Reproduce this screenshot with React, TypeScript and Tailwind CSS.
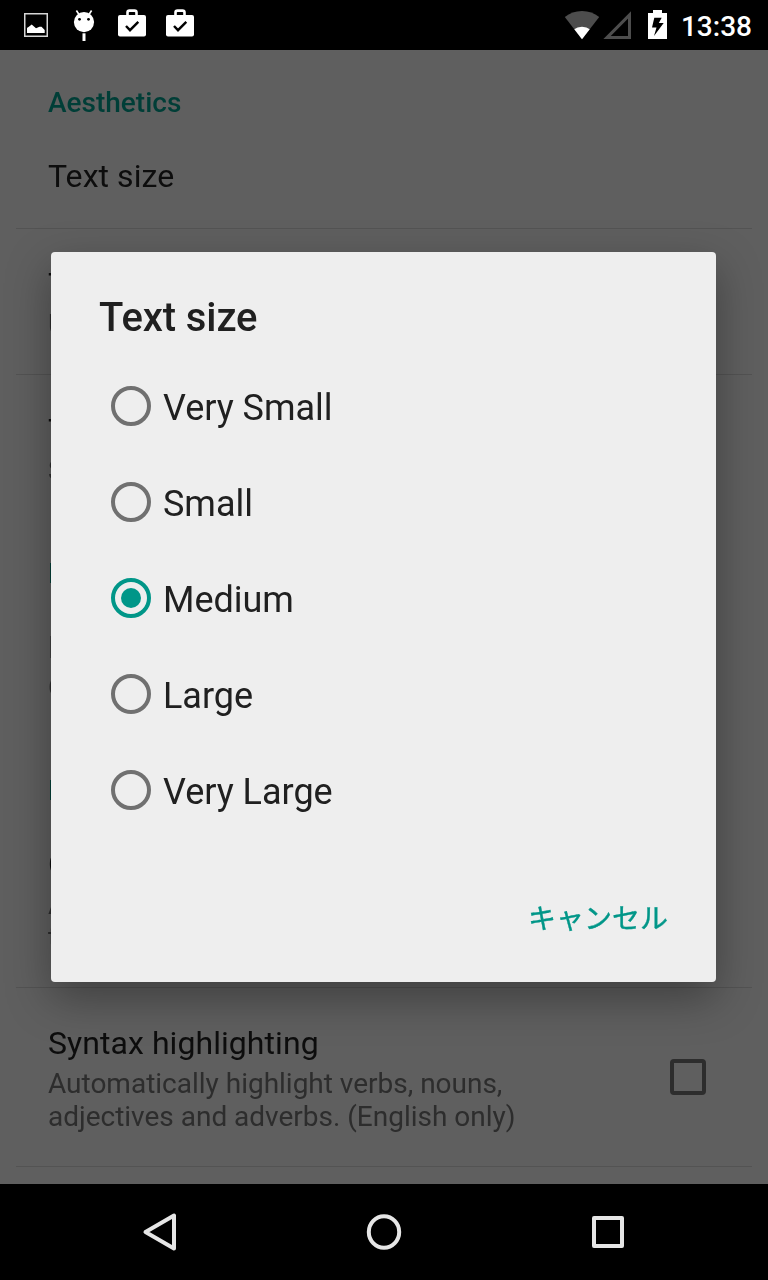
import React from "react";

function Heading({ children }: { children: React.ReactNode }) {
  return (
    <h2 className="h-[71px] px-8 pt-9 text-[28px] leading-[33px] font-medium text-[#003e37]">{children}</h2>
  );
}

type RowProps = { title: string; summary?: string[]; divider?: boolean; checkbox?: boolean };

function Row({ title, summary = [], divider, checkbox }: RowProps) {
  return (
    <div
      className={`flex items-start justify-between border-b px-8 pt-[35px] ${
        summary.length ? "pb-[33px]" : "pb-7"
      } ${divider ? "border-[#535353]" : "border-transparent"}`}
    >
      <div>
        <div className="text-[32px] leading-10 tracking-[0.06px] text-[#0d0d0d]">{title}</div>
        <div className="mt-1 text-[28px] leading-[33px] tracking-[-0.01px] text-[#2d2d2d]">
          {summary.map((line) => (
            <div key={line}>{line}</div>
          ))}
        </div>
      </div>
      {checkbox && <div className="mt-9 mr-[14px] size-9 rounded-[4px] border-4 border-[#2d2d2d]" />}
    </div>
  );
}

function Briefcase() {
  return (
    <svg width="28" height="28" viewBox="0 0 28 28">
      <path d="M9.5 6V3.6Q9.5 1.6 11.5 1.6H16.5Q18.5 1.6 18.5 3.6V6" fill="none" stroke="#fff" strokeWidth="2.6" />
      <rect y="6" width="28" height="21.5" rx="2" fill="#fff" />
      <path d="M8 17l4 4.2 8.3-8.4" fill="none" stroke="#000" strokeWidth="2.4" />
    </svg>
  );
}

function StatusBar() {
  return (
    <header className="flex h-[50px] items-start bg-black text-white">
      <svg className="mt-[13px] ml-6" width="24" height="24" viewBox="0 0 24 24">
        <rect x="0.75" y="0.75" width="22.5" height="22.5" fill="none" stroke="#d6d6d6" strokeWidth="1.5" />
        <path d="M3 20V15.2Q3.3 14.5 4.5 14L7.7 11.5L12 15.2L15.5 13.8H17.5L20.7 17V20z" fill="#fff" />
      </svg>
      <svg className="mt-[9px] ml-[25px]" width="22" height="33" viewBox="0 0 22 33">
        <circle cx="11" cy="13.1" r="10.1" fill="#fff" />
        <path d="M6 5.5L3.4 1.5M16 5.5l2.6-4" stroke="#fff" strokeWidth="1.6" />
        <path d="M11 24.3v7.7" stroke="#fff" strokeWidth="3" />
        <circle cx="6.5" cy="10.3" r="1.4" />
        <circle cx="15.5" cy="10.3" r="1.4" />
      </svg>
      <div className="mt-[9px] ml-[23px] flex gap-5">
        <Briefcase />
        <Briefcase />
      </div>
      <svg className="mt-[10px] ml-auto" width="36" height="30" viewBox="0 0 36 30">
        <path d="M18 29.3L0.8 7Q8 1 18 1T35.2 7z" fill="#4d4d4d" />
        <path d="M18 29.3L10.3 19.2Q13 16.7 18 16.7T25.7 19.2z" fill="#fff" />
      </svg>
      <svg className="mt-[10px] ml-[3px]" width="29" height="30" viewBox="0 0 29 30">
        <path d="M4 27.6H26.5V5z" fill="none" stroke="#4d4d4d" strokeWidth="3" />
      </svg>
      <svg className="mt-[10px] ml-4" width="19" height="29" viewBox="0 0 19 29">
        <path d="M0 3h5V0h9v3h5v26H0z" fill="#fff" />
        <path d="M6.3 7.7H13.7L10.8 13H15.7L6 26L8.5 17.5H4z" fill="#000" />
      </svg>
      <time className="mt-[10px] mr-4 ml-[14px] text-[28px] leading-[34px] font-medium">13:38</time>
    </header>
  );
}

function Option({ label, checked }: { label: string; checked?: boolean }) {
  return (
    <li className="flex h-24 items-center">
      <span
        className={`flex size-10 items-center justify-center rounded-full border-4 ${
          checked ? "border-[#009688]" : "border-[#707070]"
        }`}
      >
        {checked && <span className="size-5 rounded-full bg-[#009688]" />}
      </span>
      <span className="ml-3 pt-[3px] text-[36px] leading-10 tracking-[-0.02px] text-[#202020]">{label}</span>
    </li>
  );
}

export default function App() {
  return (
    <div className="relative flex h-[1280px] w-[768px] flex-col overflow-hidden bg-[#5f5f5f] font-['Roboto','Noto_Sans_CJK_JP',sans-serif]">
      <StatusBar />
      <main className="flex-1 px-4 will-change-transform">
        <Heading>Aesthetics</Heading>
        <Row title="Text size" divider />
        <Row title="T" summary={["U"]} divider />
        <Row title="T" summary={["S"]} />
        <Heading>E</Heading>
        <Row title="E" summary={["O"]} />
        <Heading>E</Heading>
        <Row title="C" summary={["A", "t"]} divider />
        <Row
          title="Syntax highlighting"
          summary={["Automatically highlight verbs, nouns,", "adjectives and adverbs. (English only)"]}
          divider
          checkbox
        />
      </main>
      <nav className="grid h-24 grid-cols-[320px_128px_320px] place-items-center bg-black">
        <svg width="40" height="40" viewBox="0 0 40 40" fill="none" stroke="#e6e6e6" strokeWidth="4" strokeLinejoin="round">
          <path d="M5.5 20L34 3.5V36.5z" />
        </svg>
        <svg width="40" height="40" viewBox="0 0 40 40" fill="none" stroke="#e6e6e6" strokeWidth="4">
          <ellipse cx="20" cy="20" rx="15.2" ry="15.7" />
        </svg>
        <svg width="40" height="40" viewBox="0 0 40 40" fill="none" stroke="#e6e6e6" strokeWidth="4" strokeLinejoin="round">
          <rect x="6" y="6" width="28" height="28" />
        </svg>
      </nav>
      <section
        role="dialog"
        className="absolute top-[252px] left-[51px] flex h-[730px] w-[665px] flex-col rounded-[4px] bg-[#eeeeee] shadow-[0_16px_44px_rgba(0,0,0,0.34)] will-change-transform"
      >
        <h1 className="mt-[42px] ml-12 text-[40px] leading-[48px] font-medium tracking-[-0.1px] text-[#202020]">Text size</h1>
        <ul className="mt-4 ml-[60px]">
          <Option label="Very Small" />
          <Option label="Small" />
          <Option label="Medium" checked />
          <Option label="Large" />
          <Option label="Very Large" />
        </ul>
        <button className="mt-[59px] mr-12 self-end font-['Noto_Sans_CJK_JP',sans-serif] text-[28px] leading-10 font-normal text-[#009688] [-webkit-text-stroke:0.4px_#009688]">
          キャンセル
        </button>
      </section>
    </div>
  );
}
